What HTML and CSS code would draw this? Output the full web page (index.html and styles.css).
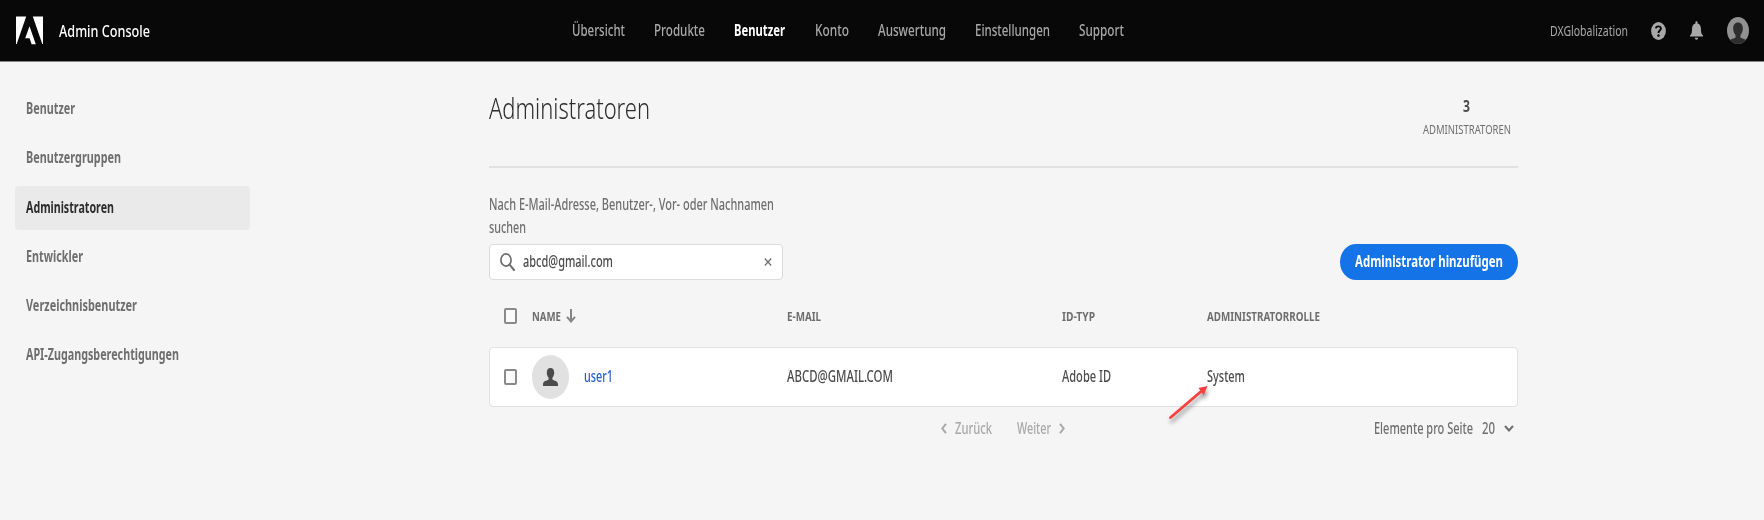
FILE: index.html
```
<!DOCTYPE html>
<html lang="de">
<head>
<meta charset="utf-8">
<title>Admin Console</title>
<link rel="stylesheet" href="styles.css">
</head>
<body>
<header class="topbar">
  <div class="brand">
    <svg class="logo" width="27" height="29" viewBox="0 0 27 29"><path fill="#fff" d="M0 .5H10.2L.7 28H0zM16.8 .5H27V28h-.7zM13.5 10.3L19.8 28.300H15.600L13.600 22.300H9.200z"/></svg>
    <span class="fit brand-name" data-w="91"><span>Admin Console</span></span>
  </div>
  <nav class="nav">
    <a class="fit" data-w="53"><span>Übersicht</span></a>
    <a class="fit" data-w="51"><span>Produkte</span></a>
    <a class="fit active" data-w="51"><span>Benutzer</span></a>
    <a class="fit" data-w="34"><span>Konto</span></a>
    <a class="fit" data-w="68"><span>Auswertung</span></a>
    <a class="fit" data-w="75"><span>Einstellungen</span></a>
    <a class="fit" data-w="45"><span>Support</span></a>
  </nav>
  <div class="tools">
    <span class="fit org" data-w="78"><span>DXGlobalization</span></span>
    <svg class="help" width="15" height="18" viewBox="0 0 15 18"><ellipse cx="7.500" cy="9" rx="7.400" ry="9" fill="#a8a8a8"/><path d="M4.900 6.400C5 3.700 9.900 3.600 9.900 6.500C9.900 8.500 7.500 8.600 7.500 11" fill="none" stroke="#080808" stroke-width="1.900"/><ellipse cx="7.500" cy="13.600" rx="1.200" ry="1.400" fill="#080808"/></svg>
    <svg class="bell" width="13" height="19" viewBox="0 0 13 19"><path fill="#a8a8a8" d="M5.400 1.500C5.400-.3 7.600-.3 7.600 1.500V2.500C10.300 3.200 11 5.500 11 8.500C11 12 11.500 13.200 13 14.500V15.500H0V14.500C1.500 13.200 2 12 2 8.500C2 5.500 2.700 3.200 5.400 2.500zM4.700 16.700H8.300C8 19.300 5 19.300 4.700 16.700z"/></svg>
    <svg width="22" height="27" viewBox="0 0 22 27"><defs><clipPath id="face"><ellipse cx="11" cy="13.500" rx="11" ry="13.500"/></clipPath></defs><g clip-path="url(#face)"><rect width="22" height="27" fill="#919191"/><path fill="#2e2e2e" d="M11 5.500C14.200 5.500 15.800 8 15.800 11.500C15.800 14.500 14.800 16.500 13.500 18V20.500C15 21.800 18 21.500 20 24V27H2V24C4 21.500 7 21.800 8.500 20.500V18C7.200 16.500 6.200 14.500 6.200 11.500C6.200 8 7.800 5.500 11 5.500z"/></g></svg>
  </div>
</header>
<div class="page">
  <aside class="sidebar">
    <a class="side-item"><span class="fit" data-w="49"><span>Benutzer</span></span></a>
    <a class="side-item"><span class="fit" data-w="95"><span>Benutzergruppen</span></span></a>
    <a class="side-item selected"><span class="fit" data-w="88"><span>Administratoren</span></span></a>
    <a class="side-item"><span class="fit" data-w="57"><span>Entwickler</span></span></a>
    <a class="side-item"><span class="fit" data-w="111"><span>Verzeichnisbenutzer</span></span></a>
    <a class="side-item"><span class="fit" data-w="153"><span>API-Zugangsberechtigungen</span></span></a>
  </aside>
  <main class="content">
    <div class="heading">
      <h1 class="fit" data-w="161"><span>Administratoren</span></h1>
      <div class="stat">
        <span class="fit count" data-w="7"><span>3</span></span>
        <span class="fit caption" data-w="88"><span>ADMINISTRATOREN</span></span>
      </div>
    </div>
    <div class="actions">
      <div class="search">
        <label class="search-label">
          <span class="fit" data-w="285"><span>Nach E-Mail-Adresse, Benutzer-, Vor- oder Nachnamen</span></span>
          <span class="fit" data-w="37"><span>suchen</span></span>
        </label>
        <div class="field">
          <svg width="15" height="18" viewBox="0 0 15 18"><ellipse cx="6" cy="7" rx="5.100" ry="6.100" fill="none" stroke="#6e6e6e" stroke-width="1.700"/><path d="M9.600 11.600L14 17" stroke="#6e6e6e" stroke-width="2" stroke-linecap="round"/></svg>
          <span class="fit value" data-w="90"><span>abcd@gmail.com</span></span>
          <svg class="clear" width="8" height="8" viewBox="0 0 8 8"><path d="M.8 .5L7.200 7.500M7.200 .5L.8 7.500" stroke="#6e6e6e" stroke-width="1.200"/></svg>
        </div>
      </div>
      <button class="add"><span class="fit" data-w="148"><span>Administrator hinzufügen</span></span></button>
    </div>
    <div class="grid-row table-head">
      <span class="check"></span>
      <span class="cell name-head"><span class="fit" data-w="29"><span>NAME</span></span><svg width="10" height="14" viewBox="0 0 10 14"><path d="M5 0V12.300M1 7.800L5 12.500L9 7.800" fill="none" stroke="#858585" stroke-width="2"/></svg></span>
      <span class="fit" data-w="34"><span>E-MAIL</span></span>
      <span class="fit" data-w="33"><span>ID-TYP</span></span>
      <span class="fit" data-w="113"><span>ADMINISTRATORROLLE</span></span>
    </div>
    <div class="grid-row table-row">
      <span class="check"></span>
      <span class="cell user">
        <svg width="37" height="44" viewBox="0 0 37 44"><ellipse cx="18.500" cy="22" rx="18.500" ry="22" fill="#e1e1e1"/><path fill="#4b4b4b" d="M18.500 13C21 13 22.200 15 22.200 17.500C22.200 20 21.500 21.500 20.400 22.800V24.600C22 26 26 25.800 26 29.500V31H11V29.500C11 25.800 15 26 16.600 24.600V22.800C15.500 21.500 14.800 20 14.800 17.500C14.800 15 16 13 18.500 13z"/></svg>
        <a class="fit" data-w="29"><span>user1</span></a>
      </span>
      <span class="fit" data-w="106"><span>ABCD@GMAIL.COM</span></span>
      <span class="fit" data-w="49"><span>Adobe ID</span></span>
      <span class="role"><span class="fit" data-w="38"><span>System</span></span>
        <svg class="pointer" width="46" height="44" viewBox="0 0 46 44"><path d="M3.500 36.500L34 10.500" stroke="#f8403f" stroke-width="2.800" stroke-linecap="round"/><path fill="#f8403f" d="M40.500 5L36.800 14.300L31.500 6.900z"/></svg>
      </span>
    </div>
    <footer class="pager">
      <div class="step">
        <svg width="6" height="11" viewBox="0 0 6 11"><path d="M5 .8L1.300 5.500L5 10.200" fill="none" stroke="#a8a8a8" stroke-width="2"/></svg>
        <span class="fit" data-w="37"><span>Zurück</span></span>
      </div>
      <div class="step next">
        <span class="fit" data-w="34"><span>Weiter</span></span>
        <svg width="6" height="11" viewBox="0 0 6 11"><path d="M1 .8L4.700 5.500L1 10.200" fill="none" stroke="#a8a8a8" stroke-width="2"/></svg>
      </div>
      <div class="page-size">
        <span class="fit" data-w="99"><span>Elemente pro Seite</span></span>
        <span class="fit" data-w="13"><span>20</span></span>
        <svg width="10" height="7" viewBox="0 0 10 7"><path d="M1 1L5 5.500L9 1" fill="none" stroke="#6e6e6e" stroke-width="2"/></svg>
      </div>
    </footer>
  </main>
</div>
<script src="fit.js"></script>
</body>
</html>
```
FILE: fit.js
```
document.querySelectorAll('.fit').forEach(function (box) {
  var label = box.firstElementChild;
  var width = Number(box.dataset.w);
  var natural = label.getBoundingClientRect().width;
  box.style.width = width + 'px';
  label.style.transform = 'scaleX(' + width / natural + ')';
});
```
FILE: styles.css
```
* { box-sizing: border-box; }
body {
  margin: 0;
  width: 1764px;
  height: 520px;
  overflow: hidden;
  background: #f5f5f5;
  color: #4b4b4b;
  font: 500 15.500px/20px "Noto Sans", "Open Sans", sans-serif;
  font-stretch: 75%;
}
svg { display: block; flex: none; }
.fit { display: block; flex: none; white-space: nowrap; padding-bottom: 2px; }
.fit > span { display: block; width: max-content; transform-origin: 0 50%; }

.topbar {
  display: flex;
  align-items: center;
  height: 62px;
  padding-left: 16px;
  background: #080808;
  border-bottom: 1px solid #858585;
  color: #a8a8a8;
}
.brand { display: flex; align-items: center; gap: 16px; width: 556px; }
.brand-name { color: #fff; font-size: 16.500px; font-weight: 500; padding-bottom: 0; }
.nav { display: flex; gap: 29.200px; width: 977.500px; }
.nav .active { color: #fff; font-weight: 700; }
.tools { display: flex; align-items: center; }
.org { font-size: 14.500px; font-weight: 400; }
.help { margin-left: 23px; }
.bell { margin: 0 23.500px 0 24.500px; }

.page { display: flex; }
.sidebar {
  display: flex;
  flex-direction: column;
  gap: 5.300px;
  width: 489px;
  padding: 25px 0 0 15px;
}
.side-item {
  display: flex;
  align-items: center;
  width: 235px;
  height: 44px;
  padding-left: 11px;
  border-radius: 4px;
  color: #6e6e6e;
  font-weight: 700;
}
.side-item.selected { background: #eaeaea; color: #2c2c2c; }

.content { width: 1029px; }
.heading {
  display: flex;
  justify-content: space-between;
  height: 106px;
  padding: 26px 7px 0 0;
  border-bottom: 2px solid #e1e1e1;
}
h1 { margin: 0; color: #2c2c2c; font-size: 29.500px; line-height: 40px; font-weight: 300; }
.stat { display: flex; flex-direction: column; align-items: center; padding-top: 8px; }
.count { font-size: 16px; font-weight: 700; line-height: 20px; transform: translateX(-1px); }
.caption { font-size: 12.500px; line-height: 20px; margin-top: 2px; font-weight: 400; color: #6e6e6e; }

.actions { display: flex; justify-content: space-between; align-items: flex-end; height: 112px; }
.search-label { display: block; color: #6e6e6e; line-height: 23px; margin-bottom: 5px; }
.search-label .fit { padding: 0; }
.field {
  display: flex;
  align-items: center;
  width: 294px;
  height: 36px;
  padding: 0 10px;
  border: 1px solid #dcdcdc;
  border-radius: 4px;
  background: #fff;
}
.value { margin-left: 8px; padding-bottom: 3px; }
.clear { margin-left: auto; }
.add {
  width: 178px;
  height: 36px;
  padding: 0 15px;
  border: 0;
  border-radius: 16px / 18px;
  background: #1473e6;
  color: #fff;
  font: inherit;
  font-weight: 700;
  text-align: left;
}

.grid-row {
  display: grid;
  grid-template-columns: 28px 255px 275px 145px 1fr;
  align-items: center;
  padding-left: 15px;
}
.table-head { height: 67px; padding-top: 5px; color: #6e6e6e; font-size: 13px; font-weight: 700; }
.table-head .fit { padding-bottom: 1px; }
.check { width: 13px; height: 16px; border: 2px solid #8a8a8a; border-radius: 2px; background: #fafafa; }
.cell { display: flex; align-items: center; }
.name-head { gap: 5px; }
.table-row {
  height: 60px;
  padding-left: 14px;
  border: 1px solid #e1e1e1;
  border-radius: 4px;
  background: #fff;
}
.user { gap: 15px; }
.user a { color: #2462d0; }
.role { position: relative; }
.pointer { position: absolute; left: -40px; top: 15px; filter: drop-shadow(1px 4px 2px rgba(0, 0, 0, .4)); }

.pager { display: flex; align-items: center; height: 43px; padding-left: 452px; color: #6e6e6e; }
.step { display: flex; align-items: center; gap: 8px; color: #a8a8a8; }
.next { margin-left: 25px; }
.page-size { display: flex; align-items: center; gap: 9px; margin: 0 4px 0 auto; }
```
